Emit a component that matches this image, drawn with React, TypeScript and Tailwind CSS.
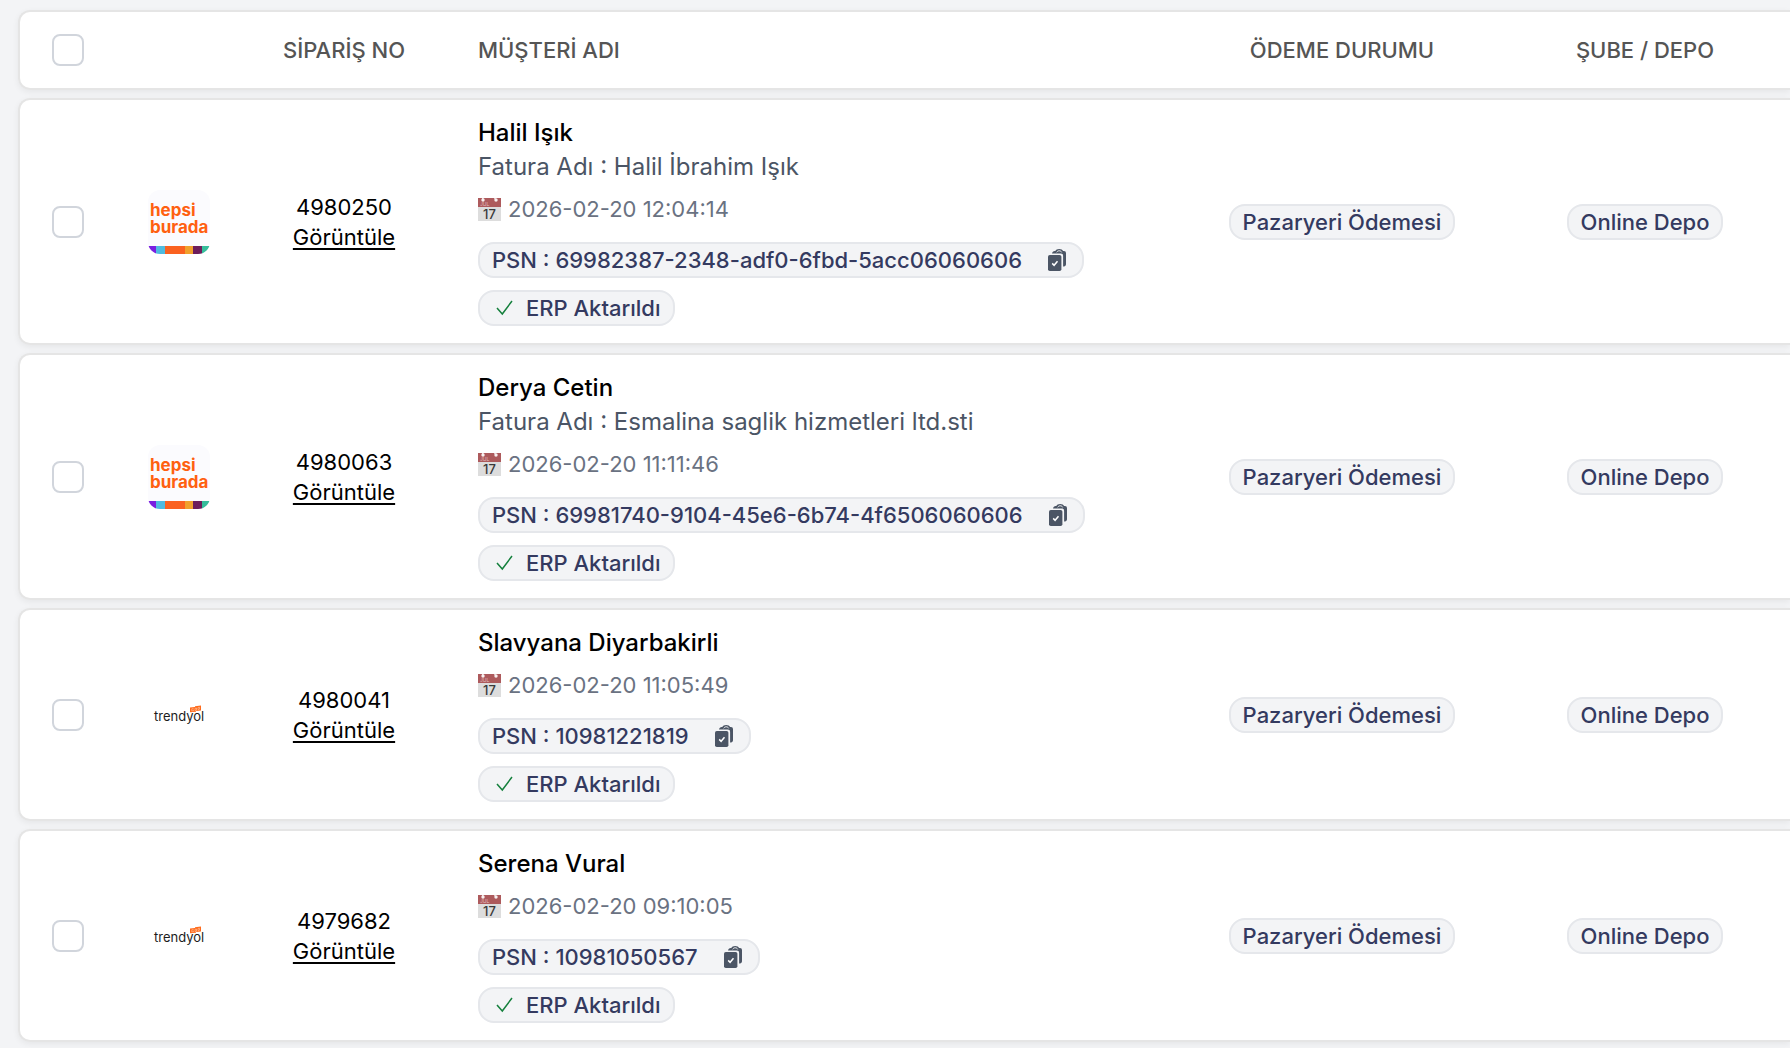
import React, { useState } from 'react';

type Marketplace = 'hepsiburada' | 'trendyol';

interface Order {
  no: string;
  marketplace: Marketplace;
  customer: string;
  invoiceName?: string;
  date: string;
  psn: string;
  payment: string;
  branch: string;
}

const orders: Order[] = [
  {
    no: '4980250',
    marketplace: 'hepsiburada',
    customer: 'Halil Işık',
    invoiceName: 'Halil İbrahim Işık',
    date: '2026-02-20 12:04:14',
    psn: '69982387-2348-adf0-6fbd-5acc06060606',
    payment: 'Pazaryeri Ödemesi',
    branch: 'Online Depo',
  },
  {
    no: '4980063',
    marketplace: 'hepsiburada',
    customer: 'Derya Cetin',
    invoiceName: 'Esmalina saglik hizmetleri ltd.sti',
    date: '2026-02-20 11:11:46',
    psn: '69981740-9104-45e6-6b74-4f6506060606',
    payment: 'Pazaryeri Ödemesi',
    branch: 'Online Depo',
  },
  {
    no: '4980041',
    marketplace: 'trendyol',
    customer: 'Slavyana Diyarbakirli',
    date: '2026-02-20 11:05:49',
    psn: '10981221819',
    payment: 'Pazaryeri Ödemesi',
    branch: 'Online Depo',
  },
  {
    no: '4979682',
    marketplace: 'trendyol',
    customer: 'Serena Vural',
    date: '2026-02-20 09:10:05',
    psn: '10981050567',
    payment: 'Pazaryeri Ödemesi',
    branch: 'Online Depo',
  },
];

function HepsiburadaLogo() {
  return (
    <svg width="62" height="64" viewBox="0 0 62 64" role="img" aria-label="hepsiburada">
      <defs>
        <clipPath id="hb-tile">
          <rect width="62" height="64" rx="12" />
        </clipPath>
      </defs>
      <g clipPath="url(#hb-tile)">
        <rect width="62" height="64" fill="#fbfbfe" />
        <rect x="0" y="56" width="8" height="8" fill="#7a1fe0" />
        <rect x="8" y="56" width="9" height="8" fill="#4fbbe0" />
        <rect x="17" y="56" width="20" height="8" fill="#fa6120" />
        <rect x="37" y="56" width="8" height="8" fill="#f0a02c" />
        <rect x="45" y="56" width="9" height="8" fill="#6d1d5b" />
        <rect x="54" y="56" width="8" height="8" fill="#35bd9b" />
      </g>
      <g fill="#ff6010" fontFamily="Inter, sans-serif" fontWeight="700" fontSize="17">
        <text x="2" y="26">hepsi</text>
        <text x="2" y="43">burada</text>
      </g>
    </svg>
  );
}

function TrendyolLogo() {
  return (
    <svg width="62" height="62" viewBox="0 0 62 62" role="img" aria-label="trendyol">
      <text x="6" y="37" fill="#1c1c1c" fontFamily="Inter, sans-serif" fontSize="13">
        trendyol
      </text>
      <path d="M42 23.500l5-.5v-.8l6-.6v5l-5 .5v.6l-6 .6z" fill="#ff6a1a" />
      <path
        d="M45.500 24.500l-1.700.3v2.200l1.700-.3v-1M47 24.300v2.200l1.500-.2v-2.200zM50 23.500v2l1.500-.3v-2z"
        fill="none"
        stroke="#ffd9c2"
        strokeWidth="0.5"
      />
    </svg>
  );
}

function CalendarIcon() {
  return (
    <svg width="23" height="23" viewBox="0 0 23 23" aria-hidden="true">
      <rect width="23" height="23" fill="#dddddd" />
      <rect width="23" height="9" fill="#ad5a5c" />
      <circle cx="5" cy="2" r="1.700" fill="#f8f1f1" />
      <circle cx="18" cy="2" r="1.700" fill="#f8f1f1" />
      <path d="M4.500 0l1 2M16.500 0l2 2.500" stroke="#f8f1f1" strokeWidth="1.200" />
      <text x="2" y="8" fontFamily="Inter, sans-serif" fontSize="5" fill="#e2bcbd">JUL</text>
      <text x="11.500" y="20.500" textAnchor="middle" fontFamily="Inter, sans-serif" fontSize="13" fontWeight="500" fill="#3a3a3a">
        17
      </text>
    </svg>
  );
}

function CopyIcon() {
  return (
    <svg width="18" height="22" viewBox="0 0 18 22" aria-hidden="true">
      <path
        d="M4 4.500C4.300 3 5.300 2 6.700 2H7.300C7.800.8 9.300 0 11.200 0s3.400.8 3.900 2H16a2 2 0 0 1 2 2v11.200c0 1.200-.8 2-2 2.200h-.9V6.700c0-1.300-.9-2.200-2.200-2.200z"
        fill="#4b5565"
      />
      <path d="M8.700 3.300c.6-1 1.400-1.500 2.500-1.500s2 .5 2.500 1.500" fill="none" stroke="#f3f4f6" strokeWidth="1" />
      <rect x="0" y="6" width="13.400" height="16" rx="1.800" fill="#4b5565" />
      <path d="M4.200 14.400l1.900 1.900 3.400-4" fill="none" stroke="#ffffff" strokeWidth="1.500" />
    </svg>
  );
}

function CheckIcon() {
  return (
    <svg width="18" height="18" viewBox="0 0 18 18" aria-hidden="true">
      <path d="M1 9l5.300 6L16 2" fill="none" stroke="#15803d" strokeWidth="1.500" />
    </svg>
  );
}

function Badge({ children }: { children: React.ReactNode }) {
  return (
    <span className="inline-flex h-9 items-center whitespace-nowrap rounded-2xl border-2 border-gray-200 bg-gray-100 px-3 text-[22px] leading-8 font-medium text-[#343a60]">
      {children}
    </span>
  );
}

function Checkbox({ label, checked, onChange }: { label: string; checked: boolean; onChange: () => void }) {
  return (
    <input
      type="checkbox"
      aria-label={label}
      checked={checked}
      onChange={onChange}
      className="block mx-auto size-8 appearance-none rounded-lg border-2 border-gray-300 bg-white checked:border-blue-600 checked:bg-blue-600"
    />
  );
}

const cell = 'border-y-2 border-[#e5e5e5] bg-white p-0';
const firstCell = 'rounded-l-xl border-y-2 border-l-2 border-[#e5e5e5] bg-white p-0';

export default function App() {
  const [selected, setSelected] = useState<string[]>([]);

  const allSelected = selected.length === orders.length;

  const toggle = (no: string) => {
    setSelected((prev) => (prev.includes(no) ? prev.filter((n) => n !== no) : [...prev, no]));
  };

  return (
    <main className="min-h-screen bg-gray-100 pt-0.5 pl-[18px] font-['Inter',sans-serif]">
      <table className="w-full table-fixed border-separate border-spacing-x-0 border-spacing-y-2">
        <colgroup>
          <col className="w-[98px]" />
          <col className="w-[126px]" />
          <col className="w-[204px]" />
          <col />
          <col className="w-[296px]" />
          <col className="w-[300px]" />
        </colgroup>
        <thead>
          <tr className="h-20 rounded-l-xl text-[22px] text-[#555555] shadow-[0_2px_6px_rgba(0,0,0,0.06)]">
            <th className={firstCell}>
              <Checkbox
                label="Tümünü seç"
                checked={allSelected}
                onChange={() => setSelected(allSelected ? [] : orders.map((o) => o.no))}
              />
            </th>
            <th className={cell} aria-label="Pazaryeri" />
            <th className={`${cell} font-medium`}>SİPARİŞ NO</th>
            <th className={`${cell} text-left font-medium`}>
              <div className="pl-8">MÜŞTERİ ADI</div>
            </th>
            <th className={`${cell} font-medium`}>ÖDEME DURUMU</th>
            <th className={`${cell} font-medium`}>
              <div className="pl-2.5">ŞUBE / DEPO</div>
            </th>
          </tr>
        </thead>
        <tbody>
          {orders.map((order) => (
            <tr key={order.no} className="rounded-l-xl shadow-[0_2px_6px_rgba(0,0,0,0.06)]">
              <td className={firstCell}>
                <Checkbox
                  label={`Sipariş ${order.no}`}
                  checked={selected.includes(order.no)}
                  onChange={() => toggle(order.no)}
                />
              </td>
              <td className={cell}>
                <div className="flex justify-center">
                  {order.marketplace === 'hepsiburada' ? <HepsiburadaLogo /> : <TrendyolLogo />}
                </div>
              </td>
              <td className={`${cell} text-center text-[22px] leading-[30px] text-black`}>
                <div>{order.no}</div>
                <a href={`#siparis-${order.no}`} className="underline decoration-2 underline-offset-3">
                  Görüntüle
                </a>
              </td>
              <td className={cell}>
                <div className="flex flex-col items-start pt-[15px] pb-[17px] pl-8">
                  <div className="text-2xl leading-[35px] font-medium text-black">{order.customer}</div>
                  {order.invoiceName && (
                    <div className="text-2xl leading-[34px] text-[#4b5565]">Fatura Adı : {order.invoiceName}</div>
                  )}
                  <div className="mt-2 mb-4 flex items-center gap-[7px] text-[22px] leading-[34px] text-gray-500">
                    <CalendarIcon />
                    {order.date}
                  </div>
                  <div className="flex flex-col items-start gap-3">
                    <Badge>
                      PSN : {order.psn}
                      <button type="button" aria-label="PSN kopyala" className="ml-[26px] mr-1 cursor-pointer">
                        <CopyIcon />
                      </button>
                    </Badge>
                    <Badge>
                      <span className="mr-3 ml-1">
                        <CheckIcon />
                      </span>
                      ERP Aktarıldı
                    </Badge>
                  </div>
                </div>
              </td>
              <td className={cell}>
                <div className="flex justify-center">
                  <Badge>{order.payment}</Badge>
                </div>
              </td>
              <td className={cell}>
                <div className="flex justify-center pl-2.5">
                  <Badge>{order.branch}</Badge>
                </div>
              </td>
            </tr>
          ))}
        </tbody>
      </table>
    </main>
  );
}
